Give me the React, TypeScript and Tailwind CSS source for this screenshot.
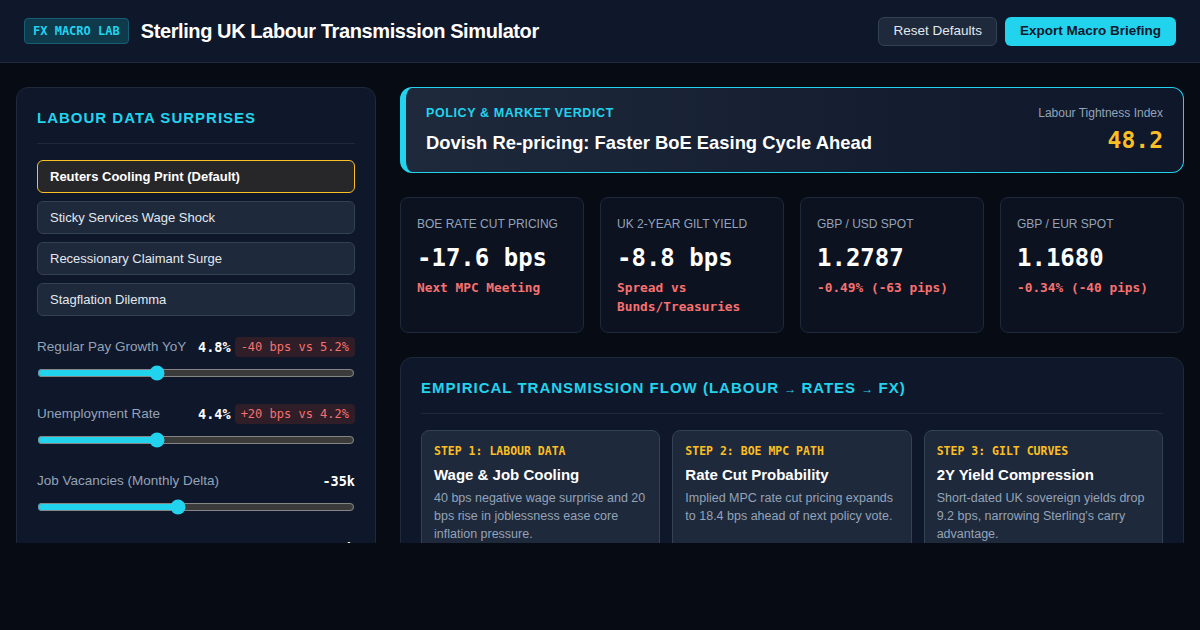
import { useState } from 'react';

const scenarios = [
  'Reuters Cooling Print (Default)',
  'Sticky Services Wage Shock',
  'Recessionary Claimant Surge',
  'Stagflation Dilemma',
];

const sliders = [
  { label: 'Regular Pay Growth YoY', value: '4.8%', delta: '-40 bps vs 5.2%', pos: 37 },
  { label: 'Unemployment Rate', value: '4.4%', delta: '+20 bps vs 4.2%', pos: 37 },
  { label: 'Job Vacancies (Monthly Delta)', value: '-35k', pos: 44 },
  { label: 'Claimant Count Change', value: '+24.5k', pos: 52 },
];

const metrics = [
  { label: 'BOE RATE CUT PRICING', value: '-17.6 bps', sub: 'Next MPC Meeting' },
  { label: 'UK 2-YEAR GILT YIELD', value: '-8.8 bps', sub: 'Spread vs Bunds/Treasuries' },
  { label: 'GBP / USD SPOT', value: '1.2787', sub: '-0.49% (-63 pips)' },
  { label: 'GBP / EUR SPOT', value: '1.1680', sub: '-0.34% (-40 pips)' },
];

const steps = [
  {
    step: 'STEP 1: LABOUR DATA',
    title: 'Wage & Job Cooling',
    text: '40 bps negative wage surprise and 20 bps rise in joblessness ease core inflation pressure.',
  },
  {
    step: 'STEP 2: BOE MPC PATH',
    title: 'Rate Cut Probability',
    text: 'Implied MPC rate cut pricing expands to 18.4 bps ahead of next policy vote.',
  },
  {
    step: 'STEP 3: GILT CURVES',
    title: '2Y Yield Compression',
    text: "Short-dated UK sovereign yields drop 9.2 bps, narrowing Sterling's carry advantage.",
  },
];

const mono = "font-['DejaVu_Sans_Mono',monospace]";

export default function App() {
  const [active, setActive] = useState(0);
  const [vals, setVals] = useState(sliders.map((s) => s.pos));

  return (
    <div className="min-h-screen bg-[#070b14] font-['Liberation_Sans',Arial,sans-serif] text-white">
      <div className="h-[543px] overflow-hidden">
        {/* Header */}
        <header className="h-[63px] bg-[#0f172a] border-b border-[#1e293b] flex items-center justify-between px-6">
          <div className="flex items-center gap-3">
            <span
              className={`${mono} text-[12px] font-bold text-[#22d3ee] bg-[#0f3a4c] border border-[#155e75] rounded px-2 py-[5px] leading-[14px]`}
            >
              FX MACRO LAB
            </span>
            <h1 className="text-[20px] font-bold tracking-[-0.4px]">
              Sterling UK Labour Transmission Simulator
            </h1>
          </div>
          <div className="flex items-center gap-2">
            <button className="h-[29px] px-[14px] text-[13.5px] text-[#e2e8f0] bg-[#1e293b] border border-[#334155] rounded-md">
              Reset Defaults
            </button>
            <button className="h-[29px] px-[15px] text-[13.5px] font-bold text-[#0f172a] bg-[#22d3ee] rounded-md">
              Export Macro Briefing
            </button>
          </div>
        </header>

        {/* Main */}
        <main className="grid grid-cols-[360px_1fr] gap-6 pt-6 px-4">
          {/* Left panel */}
          <aside className="bg-[#0f172a] border border-[#1e293b] rounded-xl px-5 pt-5 pb-6">
            <h2 className="text-[15px] font-bold tracking-[1px] text-[#22d3ee] leading-5">
              LABOUR DATA SURPRISES
            </h2>
            <div className="border-t border-[#1e293b] mt-[15px] mb-4" />
            <div className="flex flex-col gap-2">
              {scenarios.map((s, i) => (
                <button
                  key={s}
                  onClick={() => setActive(i)}
                  className={
                    i === active
                      ? 'h-[33px] text-left px-3 text-[13px] font-bold text-white bg-[#27272a] border border-[#fbbf24] rounded-md'
                      : 'h-[33px] text-left px-3 text-[13px] text-[#e2e8f0] bg-[#1e293b] border border-[#334155] rounded-md'
                  }
                >
                  {s}
                </button>
              ))}
            </div>

            <div className="flex flex-col gap-[23px] mt-[21px]">
              {sliders.map((s, i) => (
                <div key={s.label}>
                  <div className="flex items-center justify-between h-5">
                    <span className="text-[13.5px] text-[#94a3b8]">{s.label}</span>
                    <div className="flex items-center gap-1">
                      <span className={`${mono} text-[13.5px] font-bold text-white`}>{s.value}</span>
                      {s.delta && (
                        <span
                          className={`${mono} text-[12px] text-[#f87171] bg-[#2f1d27] rounded px-[6px] py-[1px]`}
                        >
                          {s.delta}
                        </span>
                      )}
                    </div>
                  </div>
                  <input
                    type="range"
                    min={0}
                    max={100}
                    value={vals[i]}
                    onChange={(e) => {
                      const next = [...vals];
                      next[i] = Number(e.target.value);
                      setVals(next);
                    }}
                    className="block w-full h-4 mt-[8px] accent-[#22d3ee] [color-scheme:dark]"
                  />
                </div>
              ))}
            </div>
          </aside>

          {/* Right column */}
          <section className="flex flex-col gap-6 min-w-0">
            {/* Verdict */}
            <div className="h-[86px] flex items-center justify-between rounded-xl border border-[#22d3ee] border-l-[6px] bg-gradient-to-r from-[#1e293b] to-[#0f172a] pl-5 pr-5">
              <div>
                <div className="text-[12.5px] font-bold tracking-[0.6px] text-[#22d3ee]">
                  POLICY &amp; MARKET VERDICT
                </div>
                <div className="text-[18.4px] font-bold mt-[6px]">
                  Dovish Re-pricing: Faster BoE Easing Cycle Ahead
                </div>
              </div>
              <div className="text-right">
                <div className="text-[12px] text-[#94a3b8]">Labour Tightness Index</div>
                <div className={`${mono} text-[23px] font-bold text-[#fbbf24] leading-8 mt-[2px]`}>48.2</div>
              </div>
            </div>

            {/* Metrics */}
            <div className="grid grid-cols-4 gap-4">
              {metrics.map((m) => (
                <div
                  key={m.label}
                  className="h-[136px] bg-[#0c1220] border border-[#1e293b] rounded-lg px-4 pt-[18px]"
                >
                  <div className="text-[12px] text-[#94a3b8] leading-4">{m.label}</div>
                  <div className={`${mono} text-[24px] font-bold text-white mt-[10px] leading-8`}>
                    {m.value}
                  </div>
                  <div className={`${mono} text-[12.8px] font-bold text-[#f87171] leading-[19px] mt-[4px]`}>
                    {m.sub}
                  </div>
                </div>
              ))}
            </div>

            {/* Flow */}
            <div className="bg-[#0f172a] border border-[#1e293b] rounded-xl px-5 pt-5 pb-5">
              <h2 className="text-[15px] font-bold tracking-[1px] text-[#22d3ee] leading-5">
                EMPIRICAL TRANSMISSION FLOW (LABOUR <span className="text-[12px] tracking-normal">→</span> RATES{' '}
                <span className="text-[12px] tracking-normal">→</span> FX)
              </h2>
              <div className="border-t border-[#1e293b] mt-[14px] mb-4" />
              <div className="grid grid-cols-3 gap-3">
                {steps.map((s) => (
                  <div
                    key={s.step}
                    className="bg-[#1e293b] border border-[#334155] rounded-lg px-3 pt-[12px] pb-4"
                  >
                    <div className={`${mono} text-[11.5px] font-bold text-[#fbbf24] leading-4`}>{s.step}</div>
                    <div className="text-[15px] font-bold text-white mt-[6px] leading-5">{s.title}</div>
                    <p className="text-[12.5px] text-[#94a3b8] leading-[18px] mt-[4px]">{s.text}</p>
                  </div>
                ))}
              </div>
            </div>
          </section>
        </main>
      </div>
    </div>
  );
}
